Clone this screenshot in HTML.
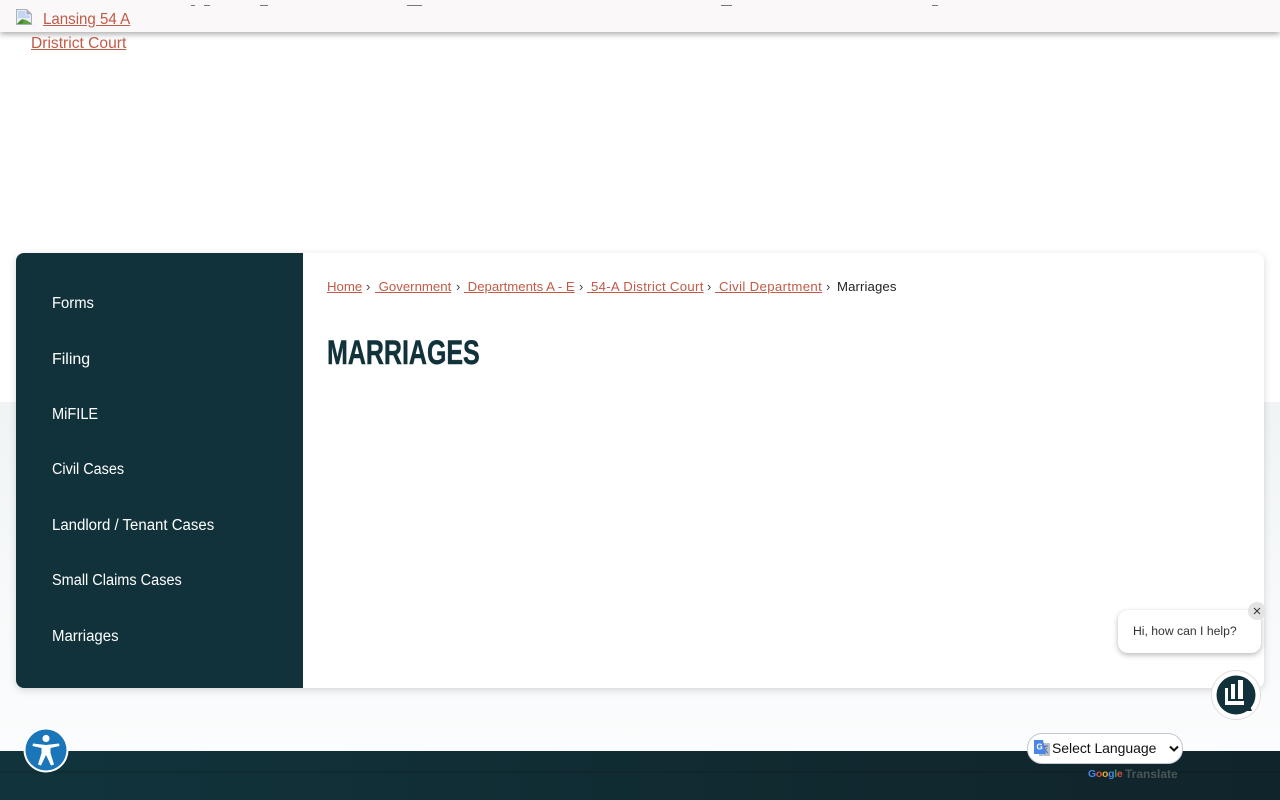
<!DOCTYPE html>
<html lang="en">
<head>
<meta charset="utf-8">
<title>Marriages</title>
<style>
html,body{margin:0;padding:0;width:1280px;height:800px;overflow:hidden;background:#fff;font-family:"Liberation Sans",sans-serif;}
.a{position:absolute;white-space:nowrap;}
#bg{position:absolute;left:0;top:402px;width:1280px;height:349px;background:linear-gradient(#f0f4f5,#f7f9fa 55%,#fbfcfd);}
#foot{position:absolute;left:0;top:751px;width:1280px;height:49px;background:linear-gradient(90deg,#11343c 0,#112f37 30%,#10282e 70%,#10252b 100%);}
#footline{position:absolute;left:0;top:771px;width:1280px;height:3px;background:linear-gradient(rgba(0,0,0,.16),rgba(0,0,0,.03));}
#top{position:absolute;left:0;top:0;width:1280px;height:32px;background:#faf8f9;box-shadow:0 2px 6px rgba(0,0,0,.35);}
.dash{position:absolute;top:5px;height:1px;background:#777;}
a{color:#c25a47;text-decoration:underline;}
#card{position:absolute;left:16px;top:253px;width:1248px;height:435px;background:#fff;border-radius:8px;box-shadow:0 2px 8px rgba(0,0,0,.16);}
#side{position:absolute;left:16px;top:253px;width:287px;height:435px;background:#11323a;border-radius:8px 0 0 8px;}
.n{position:absolute;left:52px;color:#fff;font-size:15.5px;line-height:20px;white-space:nowrap;transform-origin:0 50%;transform:scaleX(.955);}
.bc{font-size:13.2px;line-height:16px;position:absolute;top:279px;white-space:pre;}
.sep{color:#444;font-size:13px;position:absolute;top:279px;line-height:16px;}
h1{position:absolute;left:327px;top:333px;margin:0;font-size:34px;line-height:40px;font-weight:700;color:#11323a;white-space:nowrap;transform-origin:0 50%;transform:scaleX(.735);-webkit-text-stroke:.5px #11323a;}
#bubble{position:absolute;left:1118px;top:610px;width:143px;height:43px;background:#fff;border-radius:10px;box-shadow:0 2px 6px rgba(0,0,0,.28);}
#bubble span{position:absolute;left:15px;top:13px;font-size:12.2px;line-height:16px;color:#333;white-space:nowrap;}
#x{position:absolute;left:1248px;top:602px;width:18px;height:18px;border-radius:50%;background:#e4e4e4;}
#sel{position:absolute;left:1027px;top:733px;width:154px;height:29px;background:#fff;border:1px solid #c3c7d2;border-radius:15px;}
#sel span{position:absolute;left:24px;top:6px;font-size:14px;line-height:17px;color:#111;white-space:nowrap;letter-spacing:-.05px;}
</style>
</head>
<body>
<div id="bg"></div>
<div id="foot"></div>
<div id="footline"></div>
<div id="top">
<div class="dash" style="left:191px;width:4px"></div>
<div class="dash" style="left:204px;width:6px"></div>
<div class="dash" style="left:260px;width:8px"></div>
<div class="dash" style="left:407px;width:15px"></div>
<div class="dash" style="left:721px;width:11px"></div>
<div class="dash" style="left:932px;width:6px"></div>
</div>

<svg class="a" style="left:16px;top:9px" width="16" height="16" viewBox="0 0 16 16">
<path d="M0 0H11L16 5V16H0Z" fill="#aab0b6"/>
<path d="M1 1H10.500V5.500H15V15H1Z" fill="#e8eef8"/>
<path d="M2 2H9.500V6.500H14V9H2Z" fill="#c4d6f2"/>
<path d="M1 15 6 10 10 11 15 14V15Z" fill="#5fa23f"/>
<path d="M1 15 5 11 8 12 5 15Z" fill="#3f8a2a"/>
</svg>
<a class="a" href="#" style="left:43px;top:10px;font-size:15.6px;line-height:20px;transform-origin:0 50%;transform:scaleX(.967)">Lansing 54 A</a>
<a class="a" href="#" style="left:31px;top:34px;font-size:15.6px;line-height:20px">Dristrict Court</a>

<div id="card"></div>
<div id="side"></div>
<div class="n" style="top:294px">Forms</div>
<div class="n" style="top:350px;transform:scaleX(1.03)">Filing</div>
<div class="n" style="top:405px;transform:scaleX(.94)">MiFILE</div>
<div class="n" style="top:460px;transform:scaleX(.93)">Civil Cases</div>
<div class="n" style="top:516px;transform:scaleX(.967)">Landlord / Tenant Cases</div>
<div class="n" style="top:571px;transform:scaleX(.936)">Small Claims Cases</div>
<div class="n" style="top:627px;transform:scaleX(.966)">Marriages</div>

<a class="bc" href="#" style="left:327px">Home</a><span class="sep" style="left:366px">›</span>
<a class="bc" href="#" style="left:375px"> Government</a><span class="sep" style="left:456px">›</span>
<a class="bc" href="#" style="left:464px"> Departments A - E</a><span class="sep" style="left:579px">›</span>
<a class="bc" href="#" style="left:587px;letter-spacing:.3px"> 54-A District Court</a><span class="sep" style="left:707px">›</span>
<a class="bc" href="#" style="left:715px;letter-spacing:.35px"> Civil Department</a><span class="sep" style="left:826px">›</span>
<span class="bc" style="left:837px;color:#222;letter-spacing:.1px">Marriages</span>

<h1>MARRIAGES</h1>

<div id="bubble"><span>Hi, how can I help?</span></div>
<div id="x"><svg width="18" height="18" viewBox="0 0 18 18" style="display:block"><path d="M6 6 12 12M12 6 6 12" stroke="#333" stroke-width="1"/></svg></div>

<svg class="a" style="left:1210px;top:669px" width="52" height="52" viewBox="0 0 52 52">
<circle cx="26" cy="26" r="24.500" fill="#fff" stroke="#e2dede"/>
<circle cx="26" cy="26" r="19.500" fill="#11323a"/>
<path d="M37 42 42 42 40 37Z" fill="#11323a"/>
<path d="M15 19H18V32H34V36H15Z" fill="#fff"/>
<path d="M21 15H25V30H21Z" fill="#fff"/>
<path d="M28 11H33V30H28Z" fill="#fff"/>
</svg>

<div id="sel">
<svg style="position:absolute;left:5px;top:5px" width="18" height="18" viewBox="0 0 18 18">
<rect x="6" y="4" width="11" height="13" fill="#b9bec9"/>
<path d="M9 7H15M12 7V9M10 14 14 9M11 10 15 14" stroke="#5a6aa0" stroke-width="1" fill="none"/>
<path d="M1 1H10L13 15H1Z" fill="#4a85e8"/>
<text x="3.500" y="10.500" font-size="8" font-weight="700" fill="#fff" font-family="Liberation Sans, sans-serif">G</text>
</svg>
<span>Select Language</span>
<svg style="position:absolute;left:141px;top:11px" width="10" height="8" viewBox="0 0 10 8"><path d="M1 1.500 5 5.500 9 1.500" stroke="#111" stroke-width="2" fill="none"/></svg>
</div>
<div class="a" style="left:1088px;top:768px;font-size:10.500px;line-height:13px;font-weight:700;letter-spacing:-.3px"><span style="color:#4a85e8">G</span><span style="color:#d9503f">o</span><span style="color:#e0ac2b">o</span><span style="color:#4a85e8">g</span><span style="color:#3f9a4f">l</span><span style="color:#d9503f">e</span></div>
<div class="a" style="left:1125px;top:767px;font-size:12px;line-height:15px;font-weight:700;color:#4a5558">Translate</div>

<svg class="a" style="left:23px;top:727px" width="46" height="46" viewBox="0 0 46 46">
<circle cx="23" cy="23" r="22.500" fill="#fff"/>
<circle cx="23" cy="23" r="20.500" fill="#1a76b8"/>
<circle cx="23" cy="11.500" r="3.600" fill="#fff"/>
<path d="M10 16.500 23 18 36 16.500 36.500 19 27.500 21V26L31 37.500 28 38.500 23 28 18 38.500 15 37.500 18.500 26V21L9.500 19Z" fill="#fff"/>
</svg>
</body>
</html>
